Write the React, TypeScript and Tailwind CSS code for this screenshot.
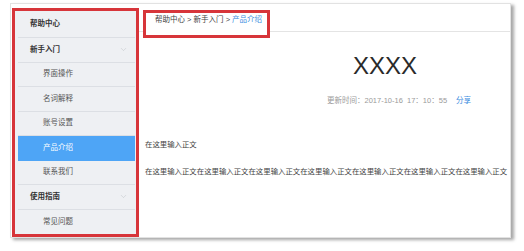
import { ChevronDown } from 'lucide-react';

const FONT = '"Liberation Sans", "Noto Sans CJK SC", sans-serif';

type Row = { label: string; level: 0 | 1; chevron?: boolean; active?: boolean };

const ROWS: Row[] = [
  { label: '新手入门', level: 0, chevron: true },
  { label: '界面操作', level: 1 },
  { label: '名词解释', level: 1 },
  { label: '账号设置', level: 1 },
  { label: '产品介绍', level: 1, active: true },
  { label: '联系我们', level: 1 },
  { label: '使用指南', level: 0, chevron: true },
  { label: '常见问题', level: 1 },
];

function SideRow({ row, last }: { row: Row; last: boolean }) {
  const base = 'h-[24.5px] flex items-center justify-between pr-[7px] text-[7.5px] leading-[10px]';
  const indent = row.level === 0 ? 'pl-[12px] font-bold text-[#333]' : 'pl-[25px] text-[#555]';
  const tone = row.active ? 'bg-[#4ea5f6] text-white' : '';
  const line = last || row.active ? '' : 'border-b border-[#dcdfe4]';
  return (
    <div className={`${base} ${indent} ${tone} ${line}`}>
      <span className={row.active ? 'text-white font-normal' : ''}>{row.label}</span>
      {row.chevron && <ChevronDown size={9} strokeWidth={1.2} className="text-[#b7bbc1]" />}
    </div>
  );
}

export default function App() {
  const body = '在这里输入正文'.repeat(7);
  return (
    <div className="w-[524px] h-[251px] bg-white pt-[3px] pl-[10px]" style={{ fontFamily: FONT }}>
      <div className="w-[501px] h-[235px] border border-[#e2e2e2] bg-white flex shadow-[3px_2px_3px_rgba(0,0,0,0.35)]">
        {/* SIDEBAR */}
        <aside className="ml-[1px] mt-[4px] w-[127px] h-[229px] border-[3px] border-[#d7353a] bg-[#eef0f3] pl-[3px] pr-[1px] shrink-0">
          <div className="h-[27px] flex items-center pl-[12px] text-[7.5px] leading-[10px] font-bold text-[#333] border-b border-[#dcdfe4]">
            帮助中心
          </div>
          {ROWS.map((r, i) => (
            <SideRow key={r.label} row={r} last={i === ROWS.length - 1} />
          ))}
        </aside>

        {/* MAIN */}
        <main className="flex-1 min-w-0 overflow-hidden">
          <div className="h-[28px] border-b border-[#e4e4e4] flex items-start">
            <div className="relative z-10 ml-[4px] mt-[6px] w-[127px] h-[28px] border-[3px] border-[#d7353a] bg-white pl-[9px] pt-[2px] text-[7.5px] leading-[10px] text-[#444] whitespace-nowrap">
              帮助中心 &gt; 新手入门 &gt; <span className="text-[#3d8de0]">产品介绍</span>
            </div>
          </div>

          <div className="pl-[6px]">
            <h1 className="w-[480px] mt-[20px] text-center text-[24px] leading-[28px] font-normal text-[#2a2a2a]">
              XXXX
            </h1>
            <div className="mt-[16px] pl-[182px] flex items-center gap-[9px] text-[7.5px] leading-[10px] whitespace-nowrap">
              <span className="text-[#9a9a9a]">更新时间：2017-10-16&nbsp;&nbsp;17：10：55</span>
              <span className="text-[#3d8de0]">分享</span>
            </div>
            <p className="mt-[34px] text-[7.4px] leading-[10px] text-[#444]">在这里输入正文</p>
            <p className="mt-[17px] text-[7.4px] leading-[10px] text-[#444] whitespace-nowrap">{body}</p>
          </div>
        </main>
      </div>
    </div>
  );
}
